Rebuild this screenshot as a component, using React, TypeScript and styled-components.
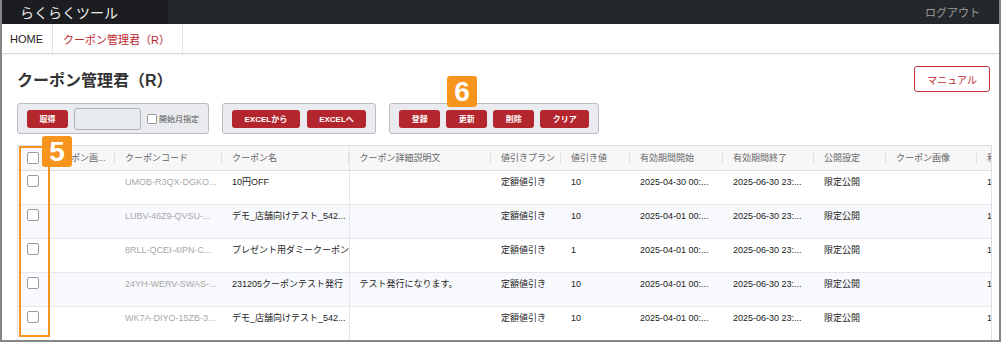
import styled, { createGlobalStyle } from 'styled-components'

const GlobalStyle = createGlobalStyle`
  html, body { margin: 0; padding: 0; background: #fff; }
  body { font-family: "Liberation Sans", "Noto Sans CJK JP", sans-serif; color: #222; }
  * { box-sizing: border-box; }
`

const Frame = styled.div`
  position: relative;
  width: 1001px;
  height: 342px;
  overflow: hidden;
  background: #fff;
  border: 2px solid #858585;
  border-top: 0;
`

const TopBar = styled.header`
  display: flex;
  height: 24px;
  background: #24282c;
`

const Brand = styled.div`
  display: flex;
  align-items: center;
  width: 166px;
  padding-left: 18px;
  background: #1b1d20;
  color: #eeeeee;
  font-size: 14px;
`

const Logout = styled.div`
  display: flex;
  align-items: center;
  margin-left: auto;
  padding-right: 19px;
  color: #9a9a9a;
  font-size: 11px;
`

const NavBar = styled.nav`
  display: flex;
  height: 30px;
  border-bottom: 1px solid #d8d8d8;
  box-shadow: 0 1px 2px rgba(0, 0, 0, 0.06);
`

const NavItem = styled.a<{ $active?: boolean }>`
  display: flex;
  align-items: center;
  padding: 0 ${(p) => (p.$active ? '12px 0 10px' : '9px 0 8px')};
  border-right: 1px solid #e4e4e4;
  font-size: 11px;
  color: ${(p) => (p.$active ? '#b9282f' : '#222')};
  text-decoration: none;
`

const Main = styled.main`
  padding: 12px 8px 0 15px;
`

const HeaderRow = styled.div`
  display: flex;
  align-items: center;
  justify-content: space-between;
  height: 26px;
`

const Title = styled.h1`
  margin: 0;
  font-size: 16px;
  font-weight: bold;
  color: #333;
`

const ManualButton = styled.button`
  height: 26px;
  padding: 0 12px;
  margin-right: 1px;
  background: #fff;
  border: 1px solid #c9343b;
  border-radius: 3px;
  color: #bf2a31;
  font-family: inherit;
  font-size: 10px;
`

const ToolbarRow = styled.div`
  display: flex;
  gap: 13px;
  margin-top: 11px;
`

const Group = styled.div<{ $gap?: number }>`
  display: flex;
  align-items: center;
  gap: ${(p) => p.$gap ?? 6}px;
  height: 31px;
  padding: 0 9px;
  background: #e9ebee;
  border: 1px solid #b9bdc3;
  border-radius: 3px;
`

const RedButton = styled.button`
  height: 18px;
  padding: 0 12.5px;
  background: #b3262d;
  border: 0;
  border-radius: 3px;
  color: #fff;
  font-family: inherit;
  font-size: 8px;
  font-weight: bold;
  white-space: nowrap;
`

const MonthInput = styled.div`
  width: 67px;
  height: 22px;
  background: #e9ecef;
  border: 1px solid #aeb2b7;
  border-radius: 3px;
`

const CheckLabel = styled.label`
  display: flex;
  align-items: center;
  gap: 2px;
  font-size: 8px;
  color: #555;
`

const Box = styled.span<{ $size?: number }>`
  display: inline-block;
  width: ${(p) => p.$size ?? 12}px;
  height: ${(p) => p.$size ?? 12}px;
  background: #fff;
  border: 1px solid #9c9c9c;
  border-radius: 2px;
`

const TableWrap = styled.div`
  width: 975px;
  margin-top: 11px;
  overflow: hidden;
  border: 1px solid #dcdfe3;
  border-bottom: 0;
`

const Table = styled.table`
  width: 1060px;
  table-layout: fixed;
  border-collapse: collapse;
`

const Th = styled.th<{ $pinned?: boolean }>`
  position: relative;
  height: 24px;
  padding: 0 10px;
  background: #f7f7f8;
  border-bottom: 1px solid #d9dce0;
  border-right: ${(p) => (p.$pinned ? '1px solid #e3e5e8' : '0')};
  color: #666;
  font-size: 9px;
  font-weight: normal;
  text-align: left;
  white-space: nowrap;
  overflow: hidden;

  &::after {
    content: '';
    position: absolute;
    right: 0;
    top: 7px;
    width: 1px;
    height: 10px;
    background: #dedfe2;
  }
`

const Tr = styled.tr<{ $alt?: boolean }>`
  background: ${(p) => (p.$alt ? '#f8f9fc' : '#fff')};
`

const Td = styled.td<{ $muted?: boolean; $pinned?: boolean }>`
  height: 34px;
  padding: 4px 10px 0 10px;
  vertical-align: top;
  border-bottom: 1px solid #e5e7eb;
  border-right: ${(p) => (p.$pinned ? '1px solid #e3e5e8' : '0')};
  color: ${(p) => (p.$muted ? '#a8a8a8' : '#222')};
  font-size: 9px;
  line-height: 14px;
  white-space: nowrap;
  overflow: hidden;
`

const CheckCell = styled.td`
  height: 34px;
  padding: 4px 0 0 9px;
  vertical-align: top;
  border-bottom: 1px solid #e5e7eb;
  line-height: 0;
`

const CheckHead = styled.th`
  height: 24px;
  padding: 0 0 0 9px;
  background: #f7f7f8;
  border-bottom: 1px solid #d9dce0;
  text-align: left;
  line-height: 0;
`

const Outline = styled.div`
  position: absolute;
  left: 17px;
  top: 146px;
  width: 31px;
  height: 191px;
  border: 2.5px solid #f7941d;
`

const Badge = styled.div<{ $left: number; $top: number }>`
  position: absolute;
  left: ${(p) => p.$left}px;
  top: ${(p) => p.$top}px;
  display: flex;
  align-items: center;
  justify-content: center;
  width: 30px;
  height: 31px;
  background: #f7941d;
  border-radius: 3px;
  color: #fff;
  font-family: "Liberation Sans", sans-serif;
  font-size: 28px;
  font-weight: bold;
`

const columns = [25, 72, 107, 127, 142, 70, 69, 93, 91, 72, 91, 101]
const headers = ['クーポン画...', 'クーポンコード', 'クーポン名', 'クーポン詳細説明文', '値引きプラン', '値引き値', '有効期間開始', '有効期間終了', '公開設定', 'クーポン画像', '利用数']

const rows = [
  ['UMOB-R3QX-DGKO...', '10円OFF', '', '定額値引き', '10', '2025-04-30 00:...', '2025-06-30 23:...', '限定公開', '', '1'],
  ['LUBV-46Z9-QVSU-...', 'デモ_店舗向けテスト_542...', '', '定額値引き', '10', '2025-04-01 00:...', '2025-06-30 23:...', '限定公開', '', '1'],
  ['8RLL-QCEI-4IPN-C...', 'プレゼント用ダミークーポン', '', '定額値引き', '1', '2025-04-01 00:...', '2025-06-30 23:...', '限定公開', '', '1'],
  ['24YH-WERV-SWAS-...', '231205クーポンテスト発行', 'テスト発行になります。', '定額値引き', '10', '2025-04-01 00:...', '2025-06-30 23:...', '限定公開', '', '1'],
  ['WK7A-DIYO-15ZB-3...', 'デモ_店舗向けテスト_542...', '', '定額値引き', '10', '2025-04-01 00:...', '2025-06-30 23:...', '限定公開', '', '1'],
]

export default function App() {
  return (
    <>
      <GlobalStyle />
      <Frame>
        <TopBar>
          <Brand>らくらくツール</Brand>
          <Logout>ログアウト</Logout>
        </TopBar>
        <NavBar>
          <NavItem>HOME</NavItem>
          <NavItem $active>クーポン管理君（R）</NavItem>
        </NavBar>
        <Main>
          <HeaderRow>
            <Title>クーポン管理君（R）</Title>
            <ManualButton>マニュアル</ManualButton>
          </HeaderRow>
          <ToolbarRow>
            <Group>
              <RedButton>取得</RedButton>
              <MonthInput />
              <CheckLabel>
                <Box $size={10} />
                開始月指定
              </CheckLabel>
            </Group>
            <Group $gap={7}>
              <RedButton>EXCELから</RedButton>
              <RedButton>EXCELへ</RedButton>
            </Group>
            <Group>
              <RedButton>登録</RedButton>
              <RedButton>更新</RedButton>
              <RedButton>削除</RedButton>
              <RedButton>クリア</RedButton>
            </Group>
          </ToolbarRow>
          <TableWrap>
            <Table>
              <colgroup>
                {columns.map((w, i) => (
                  <col key={i} style={{ width: w }} />
                ))}
              </colgroup>
              <thead>
                <tr>
                  <CheckHead>
                    <Box />
                  </CheckHead>
                  {headers.map((h, i) => (
                    <Th key={h} $pinned={i === 2}>
                      {h}
                    </Th>
                  ))}
                </tr>
              </thead>
              <tbody>
                {rows.map((r, ri) => (
                  <Tr key={ri} $alt={ri % 2 === 1}>
                    <CheckCell>
                      <Box />
                    </CheckCell>
                    <Td />
                    {r.map((v, ci) => (
                      <Td key={ci} $muted={ci === 0} $pinned={ci === 1}>
                        {v}
                      </Td>
                    ))}
                  </Tr>
                ))}
              </tbody>
            </Table>
          </TableWrap>
        </Main>
        <Outline />
        <Badge $left={40} $top={136}>5</Badge>
        <Badge $left={445} $top={76}>6</Badge>
      </Frame>
    </>
  )
}
